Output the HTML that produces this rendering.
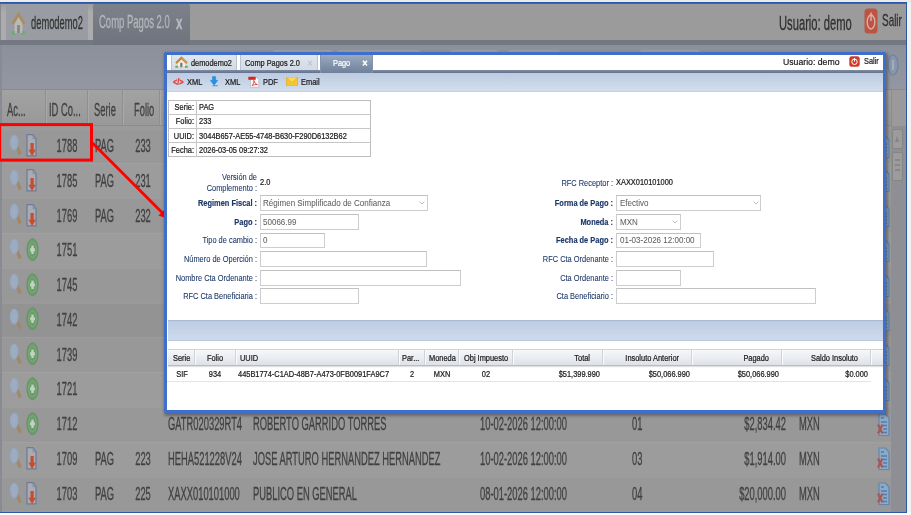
<!DOCTYPE html><html><head><meta charset="utf-8"><title>Pago</title><style>
*{box-sizing:border-box;margin:0;padding:0}
html,body{width:911px;height:515px;overflow:hidden;background:linear-gradient(#ebebeb 0,#ebebeb 3px,#f1f1f1 3px,#f1f1f1 512px,#fbfbfb 512px);font-family:"Liberation Sans",sans-serif}
#frame{position:absolute;left:0;top:0;width:911px;height:515px;overflow:hidden}
.abs{position:absolute}
#bg{position:absolute;left:0;top:2px;width:907px;height:511px;background:#9b9b9b;border-top:1px solid #2c57a6;border-right:1px solid #2c57a6;border-bottom:1px solid #2c57a6;overflow:hidden}
#bgi{position:absolute;left:0;top:-3px;width:911px;height:515px;filter:blur(.45px)}
.t{position:absolute;white-space:nowrap;font-size:18px;line-height:20px;height:20px;color:#404040;-webkit-text-stroke:.3px currentColor;transform:scaleX(.52);transform-origin:0 50%}
.t.r{transform-origin:100% 50%;text-align:right}
.t.c{transform-origin:50% 50%;text-align:center}
.row{position:absolute;left:2px;width:889px;height:34.8px;border-top:1px solid rgba(255,255,255,.05)}
.row.alt{background:#969696}
#pop{position:absolute;left:164px;top:52px;width:722px;height:361px;border:3px solid #3f6fca;background:#fff;box-shadow:1px 2px 3px 0.5px rgba(40,40,50,.42);border-radius:2px;overflow:hidden}
#pi{position:absolute;left:-167px;top:-55px;width:911px;height:515px}
.p{position:absolute;white-space:nowrap;font-size:8.45px;line-height:10px;height:10px;color:#1a1a1a;-webkit-text-stroke:.22px currentColor;transform:scaleX(.88);transform-origin:0 50%}
.p.r{transform-origin:100% 50%;text-align:right}
.p.c{transform-origin:50% 50%;text-align:center}
.lbl{color:#1c3768;-webkit-text-stroke:.08px currentColor}
.lbl.b{-webkit-text-stroke:.15px currentColor}
.b{font-weight:bold}
.inp{position:absolute;height:15.6px;border:1px solid #cdcdcd;border-top-color:#c0c0c0;background:#fff}
.gray{color:#606060;-webkit-text-stroke:.05px currentColor}
</style></head><body><div id="frame">
<div id="bg"><div id="bgi">
<div class="abs" style="left:0;top:3px;width:906px;height:1px;background:#5d6068"></div>
<div class="abs" style="left:0;top:4px;width:906px;height:36px;background:#9b9b9b"></div>
<div class="abs" style="left:0;top:4px;width:2px;height:508px;background:#8a8b92"></div>
<div class="abs" style="left:1px;top:4px;width:92px;height:36px;background:linear-gradient(#9d9d9d,#acacac 25%,#acacac)"></div>
<div class="abs" style="left:5.5px;top:4px;width:82.7px;height:36px;background:#999da3"></div>
<div class="abs" style="left:93px;top:4px;width:97px;height:41px;background:linear-gradient(#7c818a,#6e737d);border-radius:2px 2px 0 0"></div>
<div class="abs" style="left:0;top:40px;width:93px;height:5px;background:#747881"></div>
<div class="abs" style="left:190px;top:40px;width:716px;height:5px;background:#747881"></div>
<div class="abs" style="left:2px;top:45px;width:904px;height:44px;background:linear-gradient(#8b909a,#9297a1)"></div>
<div class="abs" style="left:273px;top:49.5px;width:60px;height:3px;background:#989da6;border-radius:2px 2px 0 0"></div>
<div class="abs" style="left:337px;top:49.5px;width:83px;height:3px;background:#989da6;border-radius:2px 2px 0 0"></div>
<div class="abs" style="left:450px;top:49.5px;width:48px;height:3px;background:#989da6;border-radius:2px 2px 0 0"></div>
<div class="abs" style="left:508px;top:49.5px;width:52px;height:3px;background:#989da6;border-radius:2px 2px 0 0"></div>
<div class="abs" style="left:640px;top:49.5px;width:60px;height:3px;background:#989da6;border-radius:2px 2px 0 0"></div>
<div class="abs" style="left:2px;top:89px;width:904px;height:37px;background:linear-gradient(#a2a2a2,#999999);border-top:1px solid #878a90;border-bottom:1px solid #8c8c8c"></div>
<div class="abs" style="left:45px;top:90px;width:1px;height:35px;background:#8f8f8f;border-right:1px solid #a8a8a8;width:2px"></div>
<div class="abs" style="left:87px;top:90px;width:1px;height:35px;background:#8f8f8f;border-right:1px solid #a8a8a8;width:2px"></div>
<div class="abs" style="left:122px;top:90px;width:1px;height:35px;background:#8f8f8f;border-right:1px solid #a8a8a8;width:2px"></div>
<div class="abs" style="left:159px;top:90px;width:1px;height:35px;background:#8f8f8f;border-right:1px solid #a8a8a8;width:2px"></div>
<div class="abs" style="left:891px;top:126px;width:15px;height:386px;background:#8d8f95"></div>
<div class="row" style="top:128.5px;background:#989898"></div>
<div class="row" style="top:163.3px;background:#9c9c9c"></div>
<div class="row" style="top:198.1px;background:#989898"></div>
<div class="row" style="top:232.9px;background:#9c9c9c"></div>
<div class="row" style="top:267.7px;background:#989898"></div>
<div class="row" style="top:302.5px;background:#939393"></div>
<div class="row" style="top:337.3px;background:#989898"></div>
<div class="row" style="top:372.1px;background:#9c9c9c"></div>
<div class="row" style="top:406.9px;background:#989898"></div>
<div class="row" style="top:441.7px;background:#9c9c9c"></div>
<div class="row" style="top:476.5px;background:#989898"></div>
<svg class="abs" style="left:9px;top:132.9px" width="14" height="24" viewBox="0 0 14 24"><path d="M8 13.6 L10.8 20.3" stroke="#9f8969" stroke-width="3.4" stroke-linecap="round"/><ellipse cx="5.2" cy="9.5" rx="3.8" ry="7.4" fill="#a0adbf" stroke="#93a6c3" stroke-width="1.3"/><ellipse cx="5.2" cy="9.5" rx="2" ry="4.2" fill="none" stroke="#98a9c2" stroke-width=".8"/></svg>
<svg class="abs" style="left:26.4px;top:133.1px" width="12" height="25" viewBox="0 0 12 24" preserveAspectRatio="none"><path d="M1 1.5 H7 L10 5.5 V22 H1 Z" fill="#a8abb1" stroke="#6d7b99" stroke-width="1.2"/><path d="M7 1.5 V5.5 H10" fill="none" stroke="#7d89a3" stroke-width=".8"/><path d="M4.5 9.5 H7.7 V16 H9.8 L6.1 22 L2.4 16 H4.5 Z" fill="#c84c2e"/></svg>
<div class="t c" style="left:36.5px;top:136.0px;width:60px">1788</div>
<div class="t" style="left:95px;top:136.0px">PAG</div>
<div class="t c" style="left:113px;top:136.0px;width:60px">233</div>
<svg class="abs" style="left:877px;top:134.5px" width="13" height="24" viewBox="0 0 13 24"><path d="M2 1 H8.5 L12 5 V22.5 H2 Z" fill="#8fa8c4" stroke="#5e86b4" stroke-width="1.2"/><path d="M4 5 H7 M4 9 H10 M6 12.5 H10 M6 16 H10 M6 19.5 H10" stroke="#4f7db2" stroke-width="1.6"/><path d="M1 11.5 L5.5 20.5 M5.5 11.5 L1 20.5" stroke="#b0554a" stroke-width="2.2"/></svg>
<svg class="abs" style="left:9px;top:167.67000000000002px" width="14" height="24" viewBox="0 0 14 24"><path d="M8 13.6 L10.8 20.3" stroke="#9f8969" stroke-width="3.4" stroke-linecap="round"/><ellipse cx="5.2" cy="9.5" rx="3.8" ry="7.4" fill="#a0adbf" stroke="#93a6c3" stroke-width="1.3"/><ellipse cx="5.2" cy="9.5" rx="2" ry="4.2" fill="none" stroke="#98a9c2" stroke-width=".8"/></svg>
<svg class="abs" style="left:26.4px;top:167.87px" width="12" height="25" viewBox="0 0 12 24" preserveAspectRatio="none"><path d="M1 1.5 H7 L10 5.5 V22 H1 Z" fill="#a8abb1" stroke="#6d7b99" stroke-width="1.2"/><path d="M7 1.5 V5.5 H10" fill="none" stroke="#7d89a3" stroke-width=".8"/><path d="M4.5 9.5 H7.7 V16 H9.8 L6.1 22 L2.4 16 H4.5 Z" fill="#c84c2e"/></svg>
<div class="t c" style="left:36.5px;top:170.8px;width:60px">1785</div>
<div class="t" style="left:95px;top:170.8px">PAG</div>
<div class="t c" style="left:113px;top:170.8px;width:60px">231</div>
<svg class="abs" style="left:877px;top:169.27px" width="13" height="24" viewBox="0 0 13 24"><path d="M2 1 H8.5 L12 5 V22.5 H2 Z" fill="#8fa8c4" stroke="#5e86b4" stroke-width="1.2"/><path d="M4 5 H7 M4 9 H10 M6 12.5 H10 M6 16 H10 M6 19.5 H10" stroke="#4f7db2" stroke-width="1.6"/><path d="M1 11.5 L5.5 20.5 M5.5 11.5 L1 20.5" stroke="#b0554a" stroke-width="2.2"/></svg>
<svg class="abs" style="left:9px;top:202.44000000000003px" width="14" height="24" viewBox="0 0 14 24"><path d="M8 13.6 L10.8 20.3" stroke="#9f8969" stroke-width="3.4" stroke-linecap="round"/><ellipse cx="5.2" cy="9.5" rx="3.8" ry="7.4" fill="#a0adbf" stroke="#93a6c3" stroke-width="1.3"/><ellipse cx="5.2" cy="9.5" rx="2" ry="4.2" fill="none" stroke="#98a9c2" stroke-width=".8"/></svg>
<svg class="abs" style="left:26.4px;top:202.64000000000001px" width="12" height="25" viewBox="0 0 12 24" preserveAspectRatio="none"><path d="M1 1.5 H7 L10 5.5 V22 H1 Z" fill="#a8abb1" stroke="#6d7b99" stroke-width="1.2"/><path d="M7 1.5 V5.5 H10" fill="none" stroke="#7d89a3" stroke-width=".8"/><path d="M4.5 9.5 H7.7 V16 H9.8 L6.1 22 L2.4 16 H4.5 Z" fill="#c84c2e"/></svg>
<div class="t c" style="left:36.5px;top:205.5px;width:60px">1769</div>
<div class="t" style="left:95px;top:205.5px">PAG</div>
<div class="t c" style="left:113px;top:205.5px;width:60px">232</div>
<svg class="abs" style="left:877px;top:204.04000000000002px" width="13" height="24" viewBox="0 0 13 24"><path d="M2 1 H8.5 L12 5 V22.5 H2 Z" fill="#8fa8c4" stroke="#5e86b4" stroke-width="1.2"/><path d="M4 5 H7 M4 9 H10 M6 12.5 H10 M6 16 H10 M6 19.5 H10" stroke="#4f7db2" stroke-width="1.6"/><path d="M1 11.5 L5.5 20.5 M5.5 11.5 L1 20.5" stroke="#b0554a" stroke-width="2.2"/></svg>
<svg class="abs" style="left:9px;top:237.21px" width="14" height="24" viewBox="0 0 14 24"><path d="M8 13.6 L10.8 20.3" stroke="#9f8969" stroke-width="3.4" stroke-linecap="round"/><ellipse cx="5.2" cy="9.5" rx="3.8" ry="7.4" fill="#a0adbf" stroke="#93a6c3" stroke-width="1.3"/><ellipse cx="5.2" cy="9.5" rx="2" ry="4.2" fill="none" stroke="#98a9c2" stroke-width=".8"/></svg>
<svg class="abs" style="left:25.6px;top:236.91px" width="13" height="25" viewBox="0 0 13 25"><ellipse cx="6.5" cy="12.7" rx="5.6" ry="11" fill="#6c9c6c" stroke="#629462" stroke-width="1"/><ellipse cx="6.5" cy="12.7" rx="3.9" ry="7.8" fill="none" stroke="#7eaa7e" stroke-width="1"/><path d="M6.5 8.6 V17" stroke="#c2d3c2" stroke-width="2.4"/><path d="M4.1 12.8 H8.9" stroke="#c2d3c2" stroke-width="3.2"/></svg>
<div class="t c" style="left:36.5px;top:240.3px;width:60px">1751</div>
<svg class="abs" style="left:877px;top:238.81px" width="13" height="24" viewBox="0 0 13 24"><path d="M2 1 H8.5 L12 5 V22.5 H2 Z" fill="#8fa8c4" stroke="#5e86b4" stroke-width="1.2"/><path d="M4 5 H7 M4 9 H10 M6 12.5 H10 M6 16 H10 M6 19.5 H10" stroke="#4f7db2" stroke-width="1.6"/><path d="M1 11.5 L5.5 20.5 M5.5 11.5 L1 20.5" stroke="#b0554a" stroke-width="2.2"/></svg>
<svg class="abs" style="left:9px;top:271.98px" width="14" height="24" viewBox="0 0 14 24"><path d="M8 13.6 L10.8 20.3" stroke="#9f8969" stroke-width="3.4" stroke-linecap="round"/><ellipse cx="5.2" cy="9.5" rx="3.8" ry="7.4" fill="#a0adbf" stroke="#93a6c3" stroke-width="1.3"/><ellipse cx="5.2" cy="9.5" rx="2" ry="4.2" fill="none" stroke="#98a9c2" stroke-width=".8"/></svg>
<svg class="abs" style="left:25.6px;top:271.68000000000006px" width="13" height="25" viewBox="0 0 13 25"><ellipse cx="6.5" cy="12.7" rx="5.6" ry="11" fill="#6c9c6c" stroke="#629462" stroke-width="1"/><ellipse cx="6.5" cy="12.7" rx="3.9" ry="7.8" fill="none" stroke="#7eaa7e" stroke-width="1"/><path d="M6.5 8.6 V17" stroke="#c2d3c2" stroke-width="2.4"/><path d="M4.1 12.8 H8.9" stroke="#c2d3c2" stroke-width="3.2"/></svg>
<div class="t c" style="left:36.5px;top:275.1px;width:60px">1745</div>
<svg class="abs" style="left:877px;top:273.58000000000004px" width="13" height="24" viewBox="0 0 13 24"><path d="M2 1 H8.5 L12 5 V22.5 H2 Z" fill="#8fa8c4" stroke="#5e86b4" stroke-width="1.2"/><path d="M4 5 H7 M4 9 H10 M6 12.5 H10 M6 16 H10 M6 19.5 H10" stroke="#4f7db2" stroke-width="1.6"/><path d="M1 11.5 L5.5 20.5 M5.5 11.5 L1 20.5" stroke="#b0554a" stroke-width="2.2"/></svg>
<svg class="abs" style="left:9px;top:306.75px" width="14" height="24" viewBox="0 0 14 24"><path d="M8 13.6 L10.8 20.3" stroke="#9f8969" stroke-width="3.4" stroke-linecap="round"/><ellipse cx="5.2" cy="9.5" rx="3.8" ry="7.4" fill="#a0adbf" stroke="#93a6c3" stroke-width="1.3"/><ellipse cx="5.2" cy="9.5" rx="2" ry="4.2" fill="none" stroke="#98a9c2" stroke-width=".8"/></svg>
<svg class="abs" style="left:25.6px;top:306.45000000000005px" width="13" height="25" viewBox="0 0 13 25"><ellipse cx="6.5" cy="12.7" rx="5.6" ry="11" fill="#6c9c6c" stroke="#629462" stroke-width="1"/><ellipse cx="6.5" cy="12.7" rx="3.9" ry="7.8" fill="none" stroke="#7eaa7e" stroke-width="1"/><path d="M6.5 8.6 V17" stroke="#c2d3c2" stroke-width="2.4"/><path d="M4.1 12.8 H8.9" stroke="#c2d3c2" stroke-width="3.2"/></svg>
<div class="t c" style="left:36.5px;top:309.9px;width:60px">1742</div>
<svg class="abs" style="left:877px;top:308.35px" width="13" height="24" viewBox="0 0 13 24"><path d="M2 1 H8.5 L12 5 V22.5 H2 Z" fill="#8fa8c4" stroke="#5e86b4" stroke-width="1.2"/><path d="M4 5 H7 M4 9 H10 M6 12.5 H10 M6 16 H10 M6 19.5 H10" stroke="#4f7db2" stroke-width="1.6"/><path d="M1 11.5 L5.5 20.5 M5.5 11.5 L1 20.5" stroke="#b0554a" stroke-width="2.2"/></svg>
<svg class="abs" style="left:9px;top:341.52px" width="14" height="24" viewBox="0 0 14 24"><path d="M8 13.6 L10.8 20.3" stroke="#9f8969" stroke-width="3.4" stroke-linecap="round"/><ellipse cx="5.2" cy="9.5" rx="3.8" ry="7.4" fill="#a0adbf" stroke="#93a6c3" stroke-width="1.3"/><ellipse cx="5.2" cy="9.5" rx="2" ry="4.2" fill="none" stroke="#98a9c2" stroke-width=".8"/></svg>
<svg class="abs" style="left:25.6px;top:341.22px" width="13" height="25" viewBox="0 0 13 25"><ellipse cx="6.5" cy="12.7" rx="5.6" ry="11" fill="#6c9c6c" stroke="#629462" stroke-width="1"/><ellipse cx="6.5" cy="12.7" rx="3.9" ry="7.8" fill="none" stroke="#7eaa7e" stroke-width="1"/><path d="M6.5 8.6 V17" stroke="#c2d3c2" stroke-width="2.4"/><path d="M4.1 12.8 H8.9" stroke="#c2d3c2" stroke-width="3.2"/></svg>
<div class="t c" style="left:36.5px;top:344.6px;width:60px">1739</div>
<svg class="abs" style="left:877px;top:343.12px" width="13" height="24" viewBox="0 0 13 24"><path d="M2 1 H8.5 L12 5 V22.5 H2 Z" fill="#8fa8c4" stroke="#5e86b4" stroke-width="1.2"/><path d="M4 5 H7 M4 9 H10 M6 12.5 H10 M6 16 H10 M6 19.5 H10" stroke="#4f7db2" stroke-width="1.6"/><path d="M1 11.5 L5.5 20.5 M5.5 11.5 L1 20.5" stroke="#b0554a" stroke-width="2.2"/></svg>
<svg class="abs" style="left:9px;top:376.28999999999996px" width="14" height="24" viewBox="0 0 14 24"><path d="M8 13.6 L10.8 20.3" stroke="#9f8969" stroke-width="3.4" stroke-linecap="round"/><ellipse cx="5.2" cy="9.5" rx="3.8" ry="7.4" fill="#a0adbf" stroke="#93a6c3" stroke-width="1.3"/><ellipse cx="5.2" cy="9.5" rx="2" ry="4.2" fill="none" stroke="#98a9c2" stroke-width=".8"/></svg>
<svg class="abs" style="left:25.6px;top:375.99px" width="13" height="25" viewBox="0 0 13 25"><ellipse cx="6.5" cy="12.7" rx="5.6" ry="11" fill="#6c9c6c" stroke="#629462" stroke-width="1"/><ellipse cx="6.5" cy="12.7" rx="3.9" ry="7.8" fill="none" stroke="#7eaa7e" stroke-width="1"/><path d="M6.5 8.6 V17" stroke="#c2d3c2" stroke-width="2.4"/><path d="M4.1 12.8 H8.9" stroke="#c2d3c2" stroke-width="3.2"/></svg>
<div class="t c" style="left:36.5px;top:379.4px;width:60px">1721</div>
<svg class="abs" style="left:877px;top:377.89px" width="13" height="24" viewBox="0 0 13 24"><path d="M2 1 H8.5 L12 5 V22.5 H2 Z" fill="#8fa8c4" stroke="#5e86b4" stroke-width="1.2"/><path d="M4 5 H7 M4 9 H10 M6 12.5 H10 M6 16 H10 M6 19.5 H10" stroke="#4f7db2" stroke-width="1.6"/><path d="M1 11.5 L5.5 20.5 M5.5 11.5 L1 20.5" stroke="#b0554a" stroke-width="2.2"/></svg>
<svg class="abs" style="left:9px;top:411.06px" width="14" height="24" viewBox="0 0 14 24"><path d="M8 13.6 L10.8 20.3" stroke="#9f8969" stroke-width="3.4" stroke-linecap="round"/><ellipse cx="5.2" cy="9.5" rx="3.8" ry="7.4" fill="#a0adbf" stroke="#93a6c3" stroke-width="1.3"/><ellipse cx="5.2" cy="9.5" rx="2" ry="4.2" fill="none" stroke="#98a9c2" stroke-width=".8"/></svg>
<svg class="abs" style="left:25.6px;top:410.76000000000005px" width="13" height="25" viewBox="0 0 13 25"><ellipse cx="6.5" cy="12.7" rx="5.6" ry="11" fill="#6c9c6c" stroke="#629462" stroke-width="1"/><ellipse cx="6.5" cy="12.7" rx="3.9" ry="7.8" fill="none" stroke="#7eaa7e" stroke-width="1"/><path d="M6.5 8.6 V17" stroke="#c2d3c2" stroke-width="2.4"/><path d="M4.1 12.8 H8.9" stroke="#c2d3c2" stroke-width="3.2"/></svg>
<div class="t c" style="left:36.5px;top:414.2px;width:60px">1712</div>
<div class="t" style="left:168.3px;top:414.2px">GATR020329RT4</div>
<div class="t" style="left:253.3px;top:414.2px">ROBERTO GARRIDO TORRES</div>
<div class="t" style="left:480px;top:414.2px">10-02-2026 12:00:00</div>
<div class="t" style="left:632px;top:414.2px">01</div>
<div class="t r" style="left:585.5px;top:414.2px;width:200px">$2,834.42</div>
<div class="t" style="left:799px;top:414.2px">MXN</div>
<svg class="abs" style="left:877px;top:412.66px" width="13" height="24" viewBox="0 0 13 24"><path d="M2 1 H8.5 L12 5 V22.5 H2 Z" fill="#8fa8c4" stroke="#5e86b4" stroke-width="1.2"/><path d="M4 5 H7 M4 9 H10 M6 12.5 H10 M6 16 H10 M6 19.5 H10" stroke="#4f7db2" stroke-width="1.6"/><path d="M1 11.5 L5.5 20.5 M5.5 11.5 L1 20.5" stroke="#b0554a" stroke-width="2.2"/></svg>
<svg class="abs" style="left:9px;top:445.83px" width="14" height="24" viewBox="0 0 14 24"><path d="M8 13.6 L10.8 20.3" stroke="#9f8969" stroke-width="3.4" stroke-linecap="round"/><ellipse cx="5.2" cy="9.5" rx="3.8" ry="7.4" fill="#a0adbf" stroke="#93a6c3" stroke-width="1.3"/><ellipse cx="5.2" cy="9.5" rx="2" ry="4.2" fill="none" stroke="#98a9c2" stroke-width=".8"/></svg>
<svg class="abs" style="left:26.4px;top:446.03000000000003px" width="12" height="25" viewBox="0 0 12 24" preserveAspectRatio="none"><path d="M1 1.5 H7 L10 5.5 V22 H1 Z" fill="#a8abb1" stroke="#6d7b99" stroke-width="1.2"/><path d="M7 1.5 V5.5 H10" fill="none" stroke="#7d89a3" stroke-width=".8"/><path d="M4.5 9.5 H7.7 V16 H9.8 L6.1 22 L2.4 16 H4.5 Z" fill="#c84c2e"/></svg>
<div class="t c" style="left:36.5px;top:448.9px;width:60px">1709</div>
<div class="t" style="left:95px;top:448.9px">PAG</div>
<div class="t c" style="left:113px;top:448.9px;width:60px">223</div>
<div class="t" style="left:168.3px;top:448.9px">HEHA521228V24</div>
<div class="t" style="left:253.3px;top:448.9px">JOSE ARTURO HERNANDEZ HERNANDEZ</div>
<div class="t" style="left:480px;top:448.9px">10-02-2026 12:00:00</div>
<div class="t" style="left:632px;top:448.9px">03</div>
<div class="t r" style="left:585.5px;top:448.9px;width:200px">$1,914.00</div>
<div class="t" style="left:799px;top:448.9px">MXN</div>
<svg class="abs" style="left:877px;top:447.43px" width="13" height="24" viewBox="0 0 13 24"><path d="M2 1 H8.5 L12 5 V22.5 H2 Z" fill="#8fa8c4" stroke="#5e86b4" stroke-width="1.2"/><path d="M4 5 H7 M4 9 H10 M6 12.5 H10 M6 16 H10 M6 19.5 H10" stroke="#4f7db2" stroke-width="1.6"/><path d="M1 11.5 L5.5 20.5 M5.5 11.5 L1 20.5" stroke="#b0554a" stroke-width="2.2"/></svg>
<svg class="abs" style="left:9px;top:480.6px" width="14" height="24" viewBox="0 0 14 24"><path d="M8 13.6 L10.8 20.3" stroke="#9f8969" stroke-width="3.4" stroke-linecap="round"/><ellipse cx="5.2" cy="9.5" rx="3.8" ry="7.4" fill="#a0adbf" stroke="#93a6c3" stroke-width="1.3"/><ellipse cx="5.2" cy="9.5" rx="2" ry="4.2" fill="none" stroke="#98a9c2" stroke-width=".8"/></svg>
<svg class="abs" style="left:26.4px;top:480.80000000000007px" width="12" height="25" viewBox="0 0 12 24" preserveAspectRatio="none"><path d="M1 1.5 H7 L10 5.5 V22 H1 Z" fill="#a8abb1" stroke="#6d7b99" stroke-width="1.2"/><path d="M7 1.5 V5.5 H10" fill="none" stroke="#7d89a3" stroke-width=".8"/><path d="M4.5 9.5 H7.7 V16 H9.8 L6.1 22 L2.4 16 H4.5 Z" fill="#c84c2e"/></svg>
<div class="t c" style="left:36.5px;top:483.7px;width:60px">1703</div>
<div class="t" style="left:95px;top:483.7px">PAG</div>
<div class="t c" style="left:113px;top:483.7px;width:60px">225</div>
<div class="t" style="left:168.3px;top:483.7px">XAXX010101000</div>
<div class="t" style="left:253.3px;top:483.7px">PUBLICO EN GENERAL</div>
<div class="t" style="left:480px;top:483.7px">08-01-2026 12:00:00</div>
<div class="t" style="left:632px;top:483.7px">04</div>
<div class="t r" style="left:585.5px;top:483.7px;width:200px">$20,000.00</div>
<div class="t" style="left:799px;top:483.7px">MXN</div>
<svg class="abs" style="left:877px;top:482.20000000000005px" width="13" height="24" viewBox="0 0 13 24"><path d="M2 1 H8.5 L12 5 V22.5 H2 Z" fill="#8fa8c4" stroke="#5e86b4" stroke-width="1.2"/><path d="M4 5 H7 M4 9 H10 M6 12.5 H10 M6 16 H10 M6 19.5 H10" stroke="#4f7db2" stroke-width="1.6"/><path d="M1 11.5 L5.5 20.5 M5.5 11.5 L1 20.5" stroke="#b0554a" stroke-width="2.2"/></svg>
<div class="t" style="left:6.6px;top:100.3px">Ac...</div>
<div class="t" style="left:49.3px;top:100.3px">ID Co...</div>
<div class="t" style="left:93.7px;top:100.3px">Serie</div>
<div class="t" style="left:133.6px;top:100.3px">Folio</div>
<div class="t" style="left:30.6px;top:12.5px;font-size:18.5px;color:#333;transform:scaleX(.505)">demodemo2</div>
<div class="t" style="left:99px;top:12px;font-size:19px;color:#b4b7bc;transform:scaleX(.5)">Comp Pagos 2.0</div>
<div class="t b" style="left:175.5px;top:12.5px;font-size:19px;color:#b9bcc1;transform:scaleX(.6)">x</div>
<div class="t" style="left:779px;top:12.5px;font-size:19.5px;color:#303030;transform:scaleX(.574)">Usuario: demo</div>
<div class="t" style="left:882px;top:10.7px;font-size:17px;color:#303030;transform:scaleX(.585)">Salir</div>
<svg class="abs" style="left:11px;top:11px" width="15" height="25" viewBox="0 0 15 25"><path d="M7.5 1 L14 12 H11.5 V22 H3.5 V12 H1 Z" fill="#b9b9b6"/><path d="M7.5 .5 L14.7 12.3 L12 13.6 L7.5 6 L3 13.6 L0.3 12.3 Z" fill="#a98c62"/><rect x="6" y="14" width="3" height="8" fill="#8a8a8a"/><rect x="0.5" y="20" width="3.5" height="3.5" fill="#74a874"/><rect x="11" y="20" width="3.5" height="3.5" fill="#74a874"/></svg>
<svg class="abs" style="left:863.5px;top:7.5px" width="14" height="26" viewBox="0 0 14 26"><rect x=".5" y=".5" width="13" height="25" rx="3.5" fill="#bd5442"/><ellipse cx="7" cy="14" rx="3.8" ry="7" fill="none" stroke="#d9b0a8" stroke-width="1.4"/><path d="M7 4.5 V13" stroke="#d9b0a8" stroke-width="1.5"/></svg>
<svg class="abs" style="left:886.5px;top:53.5px" width="12" height="22" viewBox="0 0 12 22"><ellipse cx="6" cy="11" rx="5" ry="10" fill="#8896ab" stroke="#6f83a3" stroke-width="1.2"/><path d="M6 6 V16" stroke="#a9b3c2" stroke-width="1.6"/></svg>
<div class="abs" style="left:891px;top:90px;width:15px;height:36px;background:#9a9a9a;border-left:1px solid #8b8b8b"></div>
<div class="abs" style="left:891.5px;top:129px;width:11.5px;height:20px;background:#9c9c9c;border:1px solid #868686;border-radius:2px"></div>
<div class="abs" style="left:895px;top:136px;width:0;height:0;border-left:2.5px solid transparent;border-right:2.5px solid transparent;border-bottom:6px solid #858585"></div>
<div class="abs" style="left:891.5px;top:152px;width:11.5px;height:29px;background:#9c9c9c;border:1px solid #868686;border-radius:2px"></div>
<div class="abs" style="left:894.5px;top:159px;width:5.5px;height:2.2px;background:#888"></div>
<div class="abs" style="left:894.5px;top:164px;width:5.5px;height:2.2px;background:#888"></div>
<div class="abs" style="left:894.5px;top:169px;width:5.5px;height:2.2px;background:#888"></div>
</div></div>
<svg class="abs" style="left:0;top:0" width="911" height="515" viewBox="0 0 911 515"><rect x="-0.5" y="124.6" width="92" height="35.5" fill="none" stroke="#ff0000" stroke-width="3"/><path d="M92.5 143 L163 213.5" stroke="#ff0000" stroke-width="2.9"/><path d="M168.5 219 L158.4 215.6 L165.3 208.9 Z" fill="#ff0000"/></svg>
<div id="pop"><div id="pi">
<div class="abs" style="left:167px;top:55px;width:716px;height:16px;background:#fff"></div>
<div class="abs" style="left:171px;top:55px;width:65.5px;height:15.5px;background:linear-gradient(#dfe6ee,#d2dae5);border:1px solid #b9c3d1;border-top:0;border-bottom:0"></div>
<div class="abs" style="left:240px;top:55px;width:77.5px;height:15.5px;background:linear-gradient(#dfe6ee,#d2dae5);border:1px solid #b9c3d1;border-top:0;border-bottom:0"></div>
<div class="abs" style="left:167px;top:70.3px;width:716px;height:2.4px;background:linear-gradient(#7e8ca3,#62718c)"></div>
<div class="abs" style="left:320.2px;top:55px;width:53.2px;height:17.5px;background:linear-gradient(#9aa9be,#6f809b);border:1px solid #8493aa;border-top:0;border-bottom:0"></div>
<div class="abs" style="left:167px;top:72.6px;width:716px;height:19px;background:linear-gradient(#bccbe1,#d3deed);border-bottom:1px solid #c6d1e0"></div>
<div class="p" style="left:191px;top:58px;font-size:8.4px">demodemo2</div>
<div class="p" style="left:245px;top:58px;font-size:8.4px">Comp Pagos 2.0</div>
<div class="p" style="left:306.5px;top:58px;font-size:8.4px;color:#b9c3d0">✕</div>
<div class="p" style="left:332.6px;top:58.3px;font-size:8.4px;color:#fff">Pago</div>
<div class="p b" style="left:361.5px;top:58.3px;font-size:8.4px;color:#fff">✕</div>
<div class="p" style="left:782.5px;top:57.3px;font-size:9.9px">Usuario: demo</div>
<div class="p" style="left:863.8px;top:56.3px;font-size:8.4px">Salir</div>
<svg class="abs" style="left:175px;top:56.3px" width="13" height="12" viewBox="0 0 13 12"><path d="M6.5 2 L10.8 6.2 V11.2 H2.2 V6.2 Z" fill="#f2efe8" stroke="#c9c4b8" stroke-width=".5"/><path d="M6.5 .3 L12.7 6.3 L11.2 7.9 L6.5 3.4 L1.8 7.9 L.3 6.3 Z" fill="#c8883a"/><path d="M6.5 1.6 L11.6 6.6" stroke="#e3b26a" stroke-width=".7"/><rect x="5.2" y="6.8" width="2.2" height="4.4" fill="#77787c"/><rect x=".2" y="9.7" width="3" height="2" rx=".8" fill="#5ab45a"/><rect x="9.8" y="9.7" width="3" height="2" rx=".8" fill="#5ab45a"/></svg>
<svg class="abs" style="left:849px;top:56px" width="11" height="11" viewBox="0 0 11 11"><rect x=".3" y=".3" width="10.4" height="10.4" rx="2.3" fill="#d43a2a"/><circle cx="5.5" cy="5.8" r="2.7" fill="none" stroke="#fff" stroke-width="1"/><path d="M5.5 2 V5.5" stroke="#fff" stroke-width="1.1"/></svg>
<div class="p b" style="left:172.6px;top:76.8px;font-size:8.3px;color:#ea2f28">&lt;/&gt;</div>
<div class="p" style="left:187px;top:77px">XML</div>
<svg class="abs" style="left:209.5px;top:76px" width="9.2" height="10.6" viewBox="0 0 10 11.5"><path d="M2.6 10.6 H8.6" stroke="#7d8796" stroke-width="1.1"/><path d="M2.7 .4 H6.1 V4.6 H8.6 L4.4 10 L.2 4.6 H2.7 Z" fill="#1f93ea" stroke="#1878c8" stroke-width=".4"/></svg>
<div class="p" style="left:225px;top:77px">XML</div>
<svg class="abs" style="left:248px;top:76px" width="12" height="12" viewBox="0 0 12 12"><path d="M2.5 1 H8 L10.8 3.8 V11.3 H2.5 Z" fill="#fbfbfb" stroke="#b5b5b5" stroke-width=".7"/><rect x=".3" y=".8" width="7.4" height="3" fill="#d8261c"/><path d="M4.2 9.6 C5.6 7.6 6.2 5.6 5.8 4.4 C6.6 6.6 7.6 8 9.4 8.6 C7.4 8.4 5.6 8.8 4.2 9.6 Z" fill="none" stroke="#d8261c" stroke-width=".8"/></svg>
<div class="p" style="left:263px;top:77px">PDF</div>
<svg class="abs" style="left:285.6px;top:77px" width="12" height="9.4" viewBox="0 0 12 9.4"><rect x=".3" y=".3" width="11.4" height="8.8" fill="#f6c431" stroke="#e0a81c" stroke-width=".6"/><path d="M.5 .6 L6 5.4 L11.5 .6" fill="#fbd95a" stroke="#e6b228" stroke-width=".7"/></svg>
<div class="p" style="left:301px;top:77px">Email</div>
<div class="abs" style="left:167.8px;top:99.5px;width:203px;height:57.4px;border:1px solid #bdbdbd;background:#fff"></div>
<div class="abs" style="left:167.8px;top:114px;width:203px;height:1px;background:#c6c6c6"></div>
<div class="abs" style="left:167.8px;top:128.3px;width:203px;height:1px;background:#c6c6c6"></div>
<div class="abs" style="left:167.8px;top:142.2px;width:203px;height:1px;background:#c6c6c6"></div>
<div class="abs" style="left:196.2px;top:99.5px;width:1px;height:57.4px;background:#c6c6c6"></div>
<div class="p r" style="left:94.2px;top:102.2px;width:100px">Serie:</div>
<div class="p" style="left:199px;top:102.2px">PAG</div>
<div class="p r" style="left:94.2px;top:116.4px;width:100px">Folio:</div>
<div class="p" style="left:199px;top:116.4px">233</div>
<div class="p r" style="left:94.2px;top:130.6px;width:100px">UUID:</div>
<div class="p" style="left:199px;top:130.6px">3044B657-AE55-4748-B630-F290D6132B62</div>
<div class="p r" style="left:94.2px;top:144.8px;width:100px">Fecha:</div>
<div class="p" style="left:199px;top:144.8px">2026-03-05 09:27:32</div>
<div class="p r lbl" style="left:57px;top:172.0px;width:200px">Versión de</div>
<div class="p r lbl" style="left:57px;top:182.5px;width:200px">Complemento :</div>
<div class="p" style="left:259.8px;top:177px">2.0</div>
<div class="p r lbl b" style="left:57px;top:198.0px;width:200px">Regimen Fiscal :</div>
<div class="inp" style="left:259.5px;top:195.3px;width:168px"></div>
<div class="p gray" style="left:263.0px;top:198.0px;font-size:9.15px">Régimen Simplificado de Confianza</div>
<svg class="abs" style="left:419.0px;top:200.8px" width="6" height="4" viewBox="0 0 6 4"><path d="M.6 .6 L3 3 L5.4 .6" fill="none" stroke="#b5b5b5" stroke-width=".9"/></svg>
<div class="p r lbl b" style="left:57px;top:216.5px;width:200px">Pago :</div>
<div class="inp" style="left:259.5px;top:214px;width:99.6px"></div>
<div class="p gray" style="left:263.0px;top:216.7px;font-size:9.15px">50066.99</div>
<div class="p r lbl" style="left:57px;top:235.0px;width:200px">Tipo de cambio :</div>
<div class="inp" style="left:259.5px;top:232.5px;width:65.6px"></div>
<div class="p gray" style="left:263.0px;top:235.2px;font-size:9.15px">0</div>
<div class="p r lbl" style="left:57px;top:254.0px;width:200px">Número de Operción :</div>
<div class="inp" style="left:259.5px;top:251px;width:167px"></div>
<div class="p r lbl" style="left:57px;top:273.0px;width:200px">Nombre Cta Ordenante :</div>
<div class="inp" style="left:259.5px;top:270px;width:201px"></div>
<div class="p r lbl" style="left:57px;top:291.0px;width:200px">RFC Cta Beneficiaria :</div>
<div class="inp" style="left:259.5px;top:288px;width:99.6px"></div>
<div class="p r lbl" style="left:413px;top:177.5px;width:200px">RFC Receptor :</div>
<div class="p" style="left:616.3px;top:177.3px">XAXX010101000</div>
<div class="p r lbl b" style="left:413px;top:198.0px;width:200px">Forma de Pago :</div>
<div class="inp" style="left:616px;top:195.3px;width:145.3px"></div>
<div class="p gray" style="left:619.5px;top:198.0px;font-size:9.15px">Efectivo</div>
<svg class="abs" style="left:752.8px;top:200.8px" width="6" height="4" viewBox="0 0 6 4"><path d="M.6 .6 L3 3 L5.4 .6" fill="none" stroke="#b5b5b5" stroke-width=".9"/></svg>
<div class="p r lbl b" style="left:413px;top:216.5px;width:200px">Moneda :</div>
<div class="inp" style="left:616px;top:214px;width:64.6px"></div>
<div class="p gray" style="left:619.5px;top:216.7px;font-size:9.15px">MXN</div>
<svg class="abs" style="left:672.1px;top:219.5px" width="6" height="4" viewBox="0 0 6 4"><path d="M.6 .6 L3 3 L5.4 .6" fill="none" stroke="#b5b5b5" stroke-width=".9"/></svg>
<div class="p r lbl b" style="left:413px;top:235.3px;width:200px">Fecha de Pago :</div>
<div class="inp" style="left:616px;top:232.5px;width:84.6px"></div>
<div class="p gray" style="left:619.5px;top:235.2px;font-size:9.15px">01-03-2026 12:00:00</div>
<div class="p r lbl" style="left:413px;top:254.0px;width:200px">RFC Cta Ordenante :</div>
<div class="inp" style="left:616px;top:251px;width:98.2px"></div>
<div class="p r lbl" style="left:413px;top:272.7px;width:200px">Cta Ordenante :</div>
<div class="inp" style="left:616px;top:270px;width:64.6px"></div>
<div class="p r lbl" style="left:413px;top:291.0px;width:200px">Cta Beneficiario :</div>
<div class="inp" style="left:616px;top:288px;width:199.6px"></div>
<div class="abs" style="left:167.6px;top:320px;width:715.4px;height:21.3px;background:linear-gradient(#bdcce3,#ceDAEC);border-top:1px solid #a9bbd4;border-bottom:1px solid #b9c8dc"></div>
<div class="abs" style="left:167.6px;top:349.3px;width:715.4px;height:16.4px;background:linear-gradient(#f6f7f9 0%,#eceef2 45%,#dde1e8 100%);border-top:1px solid #c9d3e2;border-bottom:1px solid #b9bcc2;box-shadow:0 1px 1px rgba(0,0,0,.12)"></div>
<div class="abs" style="left:194.0px;top:350.3px;width:1px;height:14.5px;background:#cfd3da;box-shadow:1px 0 0 #fafbfc"></div>
<div class="abs" style="left:234.5px;top:350.3px;width:1px;height:14.5px;background:#cfd3da;box-shadow:1px 0 0 #fafbfc"></div>
<div class="abs" style="left:397.5px;top:350.3px;width:1px;height:14.5px;background:#cfd3da;box-shadow:1px 0 0 #fafbfc"></div>
<div class="abs" style="left:424.0px;top:350.3px;width:1px;height:14.5px;background:#cfd3da;box-shadow:1px 0 0 #fafbfc"></div>
<div class="abs" style="left:458.3px;top:350.3px;width:1px;height:14.5px;background:#cfd3da;box-shadow:1px 0 0 #fafbfc"></div>
<div class="abs" style="left:512.0px;top:350.3px;width:1px;height:14.5px;background:#cfd3da;box-shadow:1px 0 0 #fafbfc"></div>
<div class="abs" style="left:602.0px;top:350.3px;width:1px;height:14.5px;background:#cfd3da;box-shadow:1px 0 0 #fafbfc"></div>
<div class="abs" style="left:690.9px;top:350.3px;width:1px;height:14.5px;background:#cfd3da;box-shadow:1px 0 0 #fafbfc"></div>
<div class="abs" style="left:780.5px;top:350.3px;width:1px;height:14.5px;background:#cfd3da;box-shadow:1px 0 0 #fafbfc"></div>
<div class="abs" style="left:870.0px;top:350.3px;width:1px;height:14.5px;background:#cfd3da;box-shadow:1px 0 0 #fafbfc"></div>
<div class="p" style="left:173px;top:352.6px">Serie</div>
<div class="p c" style="left:165px;top:352.6px;width:100px">Folio</div>
<div class="p" style="left:239.5px;top:352.6px">UUID</div>
<div class="p" style="left:401.5px;top:352.6px">Par...</div>
<div class="p" style="left:428.6px;top:352.6px">Moneda</div>
<div class="p" style="left:464px;top:352.6px">Obj Impuesto</div>
<div class="p r" style="left:489.5px;top:352.6px;width:100px">Total</div>
<div class="p r" style="left:579px;top:352.6px;width:100px">Insoluto Anterior</div>
<div class="p r" style="left:668.8px;top:352.6px;width:100px">Pagado</div>
<div class="p r" style="left:757.7px;top:352.6px;width:100px">Saldo Insoluto</div>
<div class="abs" style="left:167px;top:380.6px;width:703.5px;height:1px;background:#e4e4e4"></div>
<div class="p c" style="left:131.5px;top:369px;width:100px">SIF</div>
<div class="p c" style="left:165px;top:369px;width:100px">934</div>
<div class="p" style="left:238.3px;top:369px">445B1774-C1AD-48B7-A473-0FB0091FA9C7</div>
<div class="p c" style="left:361.5px;top:369px;width:100px">2</div>
<div class="p c" style="left:392px;top:369px;width:100px">MXN</div>
<div class="p c" style="left:436px;top:369px;width:100px">02</div>
<div class="p r" style="left:500px;top:369px;width:100px">$51,399.990</div>
<div class="p r" style="left:590.3px;top:369px;width:100px">$50,066.990</div>
<div class="p r" style="left:679.3px;top:369px;width:100px">$50,066.990</div>
<div class="p r" style="left:768px;top:369px;width:100px">$0.000</div>
</div></div>
</div></body></html>
